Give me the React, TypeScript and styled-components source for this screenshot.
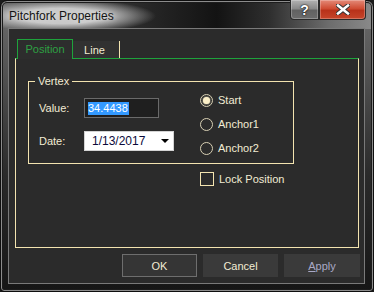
import styled, { createGlobalStyle } from 'styled-components';

const GlobalStyle = createGlobalStyle`
  html, body {
    margin: 0;
    padding: 0;
    background: #1a1a1a;
  }
  body {
    font-family: 'Liberation Sans', Arial, sans-serif;
  }
`;

const CREAM = '#f2ecd4';
const PALE = '#f3e4b0';
const GREEN = '#1ea33c';

const Window = styled.div`
  box-sizing: border-box;
  width: 374px;
  height: 292px;
  display: flex;
  flex-direction: column;
  padding: 0 8px 8px 7px;
  border: 1px solid #0e0e0e;
  border-radius: 7px 7px 4px 4px;
  box-shadow: inset 0 0 0 1px #8c8c8c, inset 0 0 0 2px #1c1c1c;
  background:
    radial-gradient(ellipse 95px 17px at 60px 15px, rgba(200, 200, 200, 1) 45%, rgba(200, 200, 200, 0) 100%) no-repeat,
    linear-gradient(90deg, #5a5a5a 0%, #262626 40%, #131313 58%, #2e2e2e 72%, #6c6c6c 88%, #8a8a8a 100%) top / 100% 28px no-repeat,
    linear-gradient(180deg, #6e6e6e 0%, #2a2a2a 60%, #161616 100%);
`;

const TitleBar = styled.div`
  height: 27px;
  flex-shrink: 0;
  display: flex;
  align-items: flex-start;
  margin-right: -1px;
`;

const Title = styled.div`
  padding: 8px 0 0 1px;
  font-size: 12px;
  color: #141414;
  text-shadow: 0 0 6px rgba(255, 255, 255, 0.7);
`;

const CaptionButtons = styled.div`
  margin-left: auto;
  margin-top: -1px;
  display: flex;
`;

const CaptionButton = styled.div<{ $close?: boolean }>`
  box-sizing: border-box;
  width: ${(p) => (p.$close ? 47 : 29)}px;
  height: 20px;
  display: flex;
  align-items: center;
  justify-content: center;
  border: 1px solid #2a2a2a;
  border-top: none;
  border-radius: ${(p) => (p.$close ? '0 0 4px 0' : '0 0 0 4px')};
  box-shadow: inset 0 0 0 1px rgba(255, 255, 255, 0.25);
  background: ${(p) =>
    p.$close
      ? 'linear-gradient(180deg, #e48a78 0%, #cf4c33 45%, #b8321a 55%, #c6452a 100%)'
      : 'linear-gradient(180deg, #b2b2b2 0%, #8a8a8a 45%, #626262 55%, #6c6c6c 100%)'};
  color: #fff;
  font-weight: bold;
  font-size: 14px;
  text-shadow: 0 0 2px #000, 0 0 1px #000;
`;

const Client = styled.div`
  box-sizing: border-box;
  flex: 1;
  display: flex;
  flex-direction: column;
  padding: 10px 4px 6px 6px;
  background: #2b2b2b;
  border: 1px solid #7a7a7a;
`;

const TabStrip = styled.div`
  height: 19px;
  flex-shrink: 0;
  display: flex;
  align-items: flex-end;
  padding-left: 2px;
  position: relative;
  z-index: 1;
`;

const Tab = styled.div<{ $active?: boolean }>`
  box-sizing: border-box;
  height: ${(p) => (p.$active ? 20 : 17)}px;
  margin-bottom: ${(p) => (p.$active ? -1 : 0)}px;
  display: flex;
  align-items: center;
  justify-content: center;
  font-size: 11px;
  background: ${(p) => (p.$active ? '#2d2d2d' : '#313131')};
  color: ${(p) => (p.$active ? '#2ea043' : CREAM)};
  ${(p) =>
    p.$active
      ? `width: 56px; border: 1px solid ${GREEN}; border-bottom: none; padding-bottom: 2px;`
      : `width: 47px; border-right: 1px solid ${PALE}; padding-right: 3px;`}
`;

const Panel = styled.div`
  box-sizing: border-box;
  height: 190px;
  flex-shrink: 0;
  margin-right: 1px;
  padding: 22px 0 0 12px;
  border: 1px solid ${PALE};
  border-top-color: ${GREEN};
`;

const GroupBox = styled.div`
  box-sizing: border-box;
  position: relative;
  width: 266px;
  height: 83px;
  border: 1px solid ${PALE};
  display: flex;
`;

const Legend = styled.span`
  position: absolute;
  top: -8px;
  left: 6px;
  padding: 0 3px;
  background: #2b2b2b;
  color: ${CREAM};
  font-size: 11px;
  line-height: 14px;
`;

const Fields = styled.div`
  width: 171px;
  box-sizing: border-box;
  padding: 16px 0 0 10px;
  display: flex;
  flex-direction: column;
  gap: 13px;
`;

const FieldRow = styled.div`
  display: flex;
  align-items: center;
  height: 20px;
`;

const Label = styled.span`
  width: 45px;
  color: ${CREAM};
  font-size: 11px;
`;

const ValueInput = styled.div`
  box-sizing: border-box;
  width: 75px;
  height: 20px;
  border: 1px solid #6a6a6a;
  background: #1f1f1f;
  padding: 3px 0 0 3px;
  font-size: 11px;
`;

const Selected = styled.span`
  background: #3399ff;
  color: #fff;
  line-height: 13px;
  display: inline-block;
  padding-right: 1px;
`;

const Combo = styled.div`
  box-sizing: border-box;
  width: 90px;
  height: 20px;
  display: flex;
  align-items: center;
  background: #fff;
  border: 1px solid #d4d4d4;
  padding: 0 4px 0 7px;
  font-size: 12px;
  color: #0a0a3a;
`;

const Arrow = styled.span`
  margin-left: auto;
  width: 0;
  height: 0;
  border-left: 4px solid transparent;
  border-right: 4px solid transparent;
  border-top: 4px solid #000;
`;

const Radios = styled.div`
  padding-top: 11px;
  display: flex;
  flex-direction: column;
  gap: 10px;
`;

const OptionRow = styled.div`
  display: flex;
  align-items: center;
  height: 14px;
  gap: 5px;
  color: ${CREAM};
  font-size: 11px;
`;

const RadioCircle = styled.span<{ $checked?: boolean }>`
  box-sizing: border-box;
  width: 13px;
  height: 13px;
  border-radius: 50%;
  border: 1px solid #d8d0b4;
  display: flex;
  align-items: center;
  justify-content: center;
  &::after {
    content: '';
    display: ${(p) => (p.$checked ? 'block' : 'none')};
    width: 7px;
    height: 7px;
    border-radius: 50%;
    background: #fbefc8;
    box-shadow: 0 0 2px #fbefc8;
  }
`;

const CheckBox = styled.span`
  box-sizing: border-box;
  width: 14px;
  height: 14px;
  border: 1px solid ${PALE};
`;

const LockRow = styled(OptionRow)`
  margin: 8px 0 0 172px;
`;

const ButtonRow = styled.div`
  margin-top: 6px;
  display: flex;
  justify-content: flex-end;
  gap: 6px;
`;

const Button = styled.div<{ $default?: boolean; $disabled?: boolean }>`
  box-sizing: border-box;
  width: ${(p) => (p.$disabled ? 76 : 75)}px;
  height: 23px;
  display: flex;
  align-items: center;
  justify-content: center;
  font-size: 11px;
  background: ${(p) => (p.$default ? '#353535' : '#3a3a3a')};
  border: 1px solid ${(p) => (p.$default ? '#6e6e6e' : '#3a3a3a')};
  color: ${(p) => (p.$disabled ? '#a9a9c6' : CREAM)};
  u {
    text-decoration-thickness: 1px;
  }
`;

export default function App() {
  return (
    <>
      <GlobalStyle />
      <Window>
        <TitleBar>
          <Title>Pitchfork Properties</Title>
          <CaptionButtons>
            <CaptionButton>?</CaptionButton>
            <CaptionButton $close>
              <svg width="14" height="11" viewBox="0 0 14 11">
                <path d="M2 1.5 L12 9.5 M12 1.5 L2 9.5" stroke="#333" strokeWidth="4.5" strokeLinecap="square" />
                <path d="M2 1.5 L12 9.5 M12 1.5 L2 9.5" stroke="#fff" strokeWidth="2.5" strokeLinecap="square" />
              </svg>
            </CaptionButton>
          </CaptionButtons>
        </TitleBar>
        <Client>
          <TabStrip>
            <Tab $active>Position</Tab>
            <Tab>Line</Tab>
          </TabStrip>
          <Panel>
            <GroupBox>
              <Legend>Vertex</Legend>
              <Fields>
                <FieldRow>
                  <Label>Value:</Label>
                  <ValueInput>
                    <Selected>34.4438</Selected>
                  </ValueInput>
                </FieldRow>
                <FieldRow>
                  <Label>Date:</Label>
                  <Combo>
                    1/13/2017
                    <Arrow />
                  </Combo>
                </FieldRow>
              </Fields>
              <Radios>
                <OptionRow>
                  <RadioCircle $checked />
                  Start
                </OptionRow>
                <OptionRow>
                  <RadioCircle />
                  Anchor1
                </OptionRow>
                <OptionRow>
                  <RadioCircle />
                  Anchor2
                </OptionRow>
              </Radios>
            </GroupBox>
            <LockRow>
              <CheckBox />
              Lock Position
            </LockRow>
          </Panel>
          <ButtonRow>
            <Button $default>OK</Button>
            <Button>Cancel</Button>
            <Button $disabled>
              <u>A</u>pply
            </Button>
          </ButtonRow>
        </Client>
      </Window>
    </>
  );
}
